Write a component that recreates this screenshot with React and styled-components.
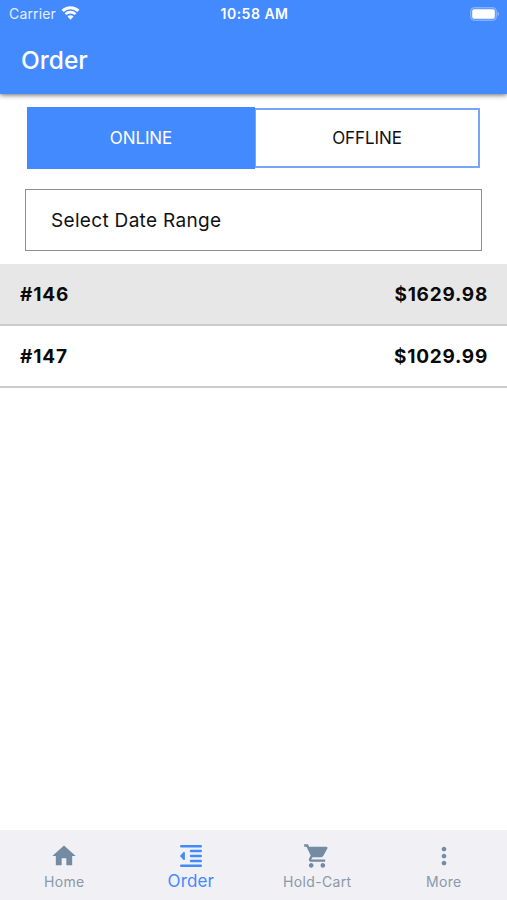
import React, { useState } from 'react';
import styled, { createGlobalStyle } from 'styled-components';
import { MdHome, MdShoppingCart, MdMoreVert } from 'react-icons/md';

const orders = [
  { id: 146, total: 1629.98 },
  { id: 147, total: 1029.99 },
];

const WifiIcon = () => (
  <svg width='19' height='14' viewBox='0 0 18 14' fill='none'>
    <path d='M1.1 4.9a11.4 11.4 0 0 1 15.8 0' stroke='#fff' strokeWidth='2.9' />
    <path d='M4 8.1a7.2 7.2 0 0 1 10 0' stroke='#fff' strokeWidth='2.6' />
    <path d='M9 13.7 6 10.6a4.2 4.2 0 0 1 6 0z' fill='#fff' />
  </svg>
);

const BatteryIcon = () => (
  <svg width='30' height='14' viewBox='0 0 30 14'>
    <rect x='0.6' y='0.6' width='25.8' height='12.8' rx='3.6' fill='#5f9bff' stroke='#8bb5ff' />
    <rect x='2.2' y='2.3' width='22.6' height='9.4' rx='2' fill='#fff' />
    <path d='M27.5 4.8c2 .7 2 3.7 0 4.4z' fill='#8bb5ff' />
  </svg>
);

const OrderIcon = () => (
  <svg width='28' height='28' viewBox='0 0 28 28'>
    <path
      d='M4.2 4.2h19.6M14 9h9.8M14 14h9.8M14 19h9.8M4.2 23.8h19.6'
      fill='none'
      stroke='currentColor'
      strokeWidth='2.4'
      strokeLinecap='round'
    />
    <path
      d='M4 14 7 10.8v6.4z'
      fill='currentColor'
      stroke='currentColor'
      strokeWidth='1.8'
      strokeLinejoin='round'
    />
  </svg>
);

const tabs = [
  { name: 'Home', icon: <MdHome /> },
  { name: 'Order', icon: <OrderIcon /> },
  { name: 'Hold-Cart', icon: <MdShoppingCart /> },
  { name: 'More', icon: <MdMoreVert /> },
];

const App = () => {
  const [mode, setMode] = useState('online');
  const [tab, setTab] = useState('Order');

  return (
    <>
      <GlobalStyle />
      <Screen>
        <Header>
          <StatusBar>
            <Carrier>
              Carrier <WifiIcon />
            </Carrier>
            <Clock>10:58 AM</Clock>
            <Battery>
              <BatteryIcon />
            </Battery>
          </StatusBar>
          <Title>Order</Title>
        </Header>
        <Content>
          <Segment>
            <SegmentButton
              $active={mode === 'online'}
              onClick={() => setMode('online')}
            >
              ONLINE
            </SegmentButton>
            <SegmentButton
              $active={mode === 'offline'}
              onClick={() => setMode('offline')}
            >
              OFFLINE
            </SegmentButton>
          </Segment>
          <DateRange>Select Date Range</DateRange>
          <OrderList>
            {orders.map(({ id, total }) => (
              <OrderRow key={id}>
                <span>#{id}</span>
                <Total>${total.toFixed(2)}</Total>
              </OrderRow>
            ))}
          </OrderList>
        </Content>
        <TabBar>
          {tabs.map(({ name, icon }) => (
            <Tab key={name} $active={name === tab} onClick={() => setTab(name)}>
              {icon}
              <span>{name}</span>
            </Tab>
          ))}
        </TabBar>
      </Screen>
    </>
  );
};

const GlobalStyle = createGlobalStyle`
  * {
    box-sizing: border-box;
  }
  body {
    margin: 0;
    background: #fff;
    font-family: Inter, 'Liberation Sans', sans-serif;
  }
  button {
    margin: 0;
    padding: 0;
    font-family: inherit;
    cursor: pointer;
  }
`;

const Screen = styled.div`
  display: flex;
  flex-direction: column;
  height: 100vh;
  min-height: 500px;
  overflow: hidden;
`;

const Header = styled.header`
  height: 94px;
  flex-shrink: 0;
  color: #fff;
  background: #448aff;
  box-shadow: 0 1px 5px rgba(0, 0, 0, 0.6);
`;

const StatusBar = styled.div`
  display: grid;
  grid-template-columns: 1fr auto 1fr;
  align-items: center;
  height: 27px;
  padding: 0 7px 0 9px;
`;

const Carrier = styled.div`
  display: flex;
  align-items: center;
  gap: 5px;
  font-size: 14px;
  letter-spacing: 0.15px;
  color: #e6efff;
  svg {
    margin-top: -2px;
  }
`;

const Clock = styled.div`
  font-size: 14px;
  font-weight: 600;
  letter-spacing: 0.5px;
`;

const Battery = styled.div`
  display: flex;
  justify-content: flex-end;
`;

const Title = styled.h1`
  margin: 0;
  padding-left: 21px;
  font-size: 24.5px;
  font-weight: 500;
  line-height: 66px;
`;

const Content = styled.main`
  flex: 1;
  padding-top: 13px;
`;

const Segment = styled.div`
  display: flex;
  align-items: center;
  height: 62px;
  margin: 0 27px;
`;

const SegmentButton = styled.button`
  flex: ${({ $active }) => ($active ? '0 0 228px' : '1')};
  height: ${({ $active }) => ($active ? '62px' : '60px')};
  border: ${({ $active }) => ($active ? '1px solid #448aff' : '2px solid #76a6f5')};
  border-left-width: 1px;
  font-size: 17px;
  letter-spacing: -0.1px;
  color: ${({ $active }) => ($active ? '#fff' : '#111')};
  background: ${({ $active }) => ($active ? '#448aff' : '#fff')};
`;

const DateRange = styled.button`
  display: block;
  width: calc(100% - 50px);
  height: 62px;
  margin: 20px 25px 13px;
  padding-left: 25px;
  border: 1px solid #8e8e8e;
  font-size: 19px;
  letter-spacing: 0.32px;
  text-align: left;
  color: #111;
  background: #fff;
`;

const OrderList = styled.ul`
  margin: 0;
  padding: 0;
  list-style: none;
`;

const OrderRow = styled.li`
  display: flex;
  justify-content: space-between;
  align-items: center;
  height: 62px;
  padding: 0 19px 0 20px;
  border-bottom: 2px solid #cbcbcb;
  font-size: 19px;
  font-weight: 700;
  letter-spacing: 0.85px;
  color: #0a0a0a;
  &:nth-child(odd) {
    background: #e7e7e7;
  }
`;

const Total = styled.span`
  letter-spacing: 0.75px;
`;

const TabBar = styled.nav`
  display: flex;
  height: 70px;
  flex-shrink: 0;
  padding-left: 1px;
  background: #f0f0f5;
`;

const Tab = styled.button`
  display: flex;
  flex: 1;
  flex-direction: column;
  align-items: center;
  padding-top: 12px;
  border: 0;
  font-size: ${({ $active }) => ($active ? '17px' : '14px')};
  color: ${({ $active }) => ($active ? '#448aff' : '#8b98aa')};
  background: none;
  svg {
    width: 28px;
    height: 28px;
    color: ${({ $active }) => ($active ? '#448aff' : '#738ba3')};
  }
  span {
    line-height: ${({ $active }) => ($active ? '22px' : '24px')};
    letter-spacing: ${({ $active }) => ($active ? '0.1px' : '0.35px')};
  }
`;

export default App;
